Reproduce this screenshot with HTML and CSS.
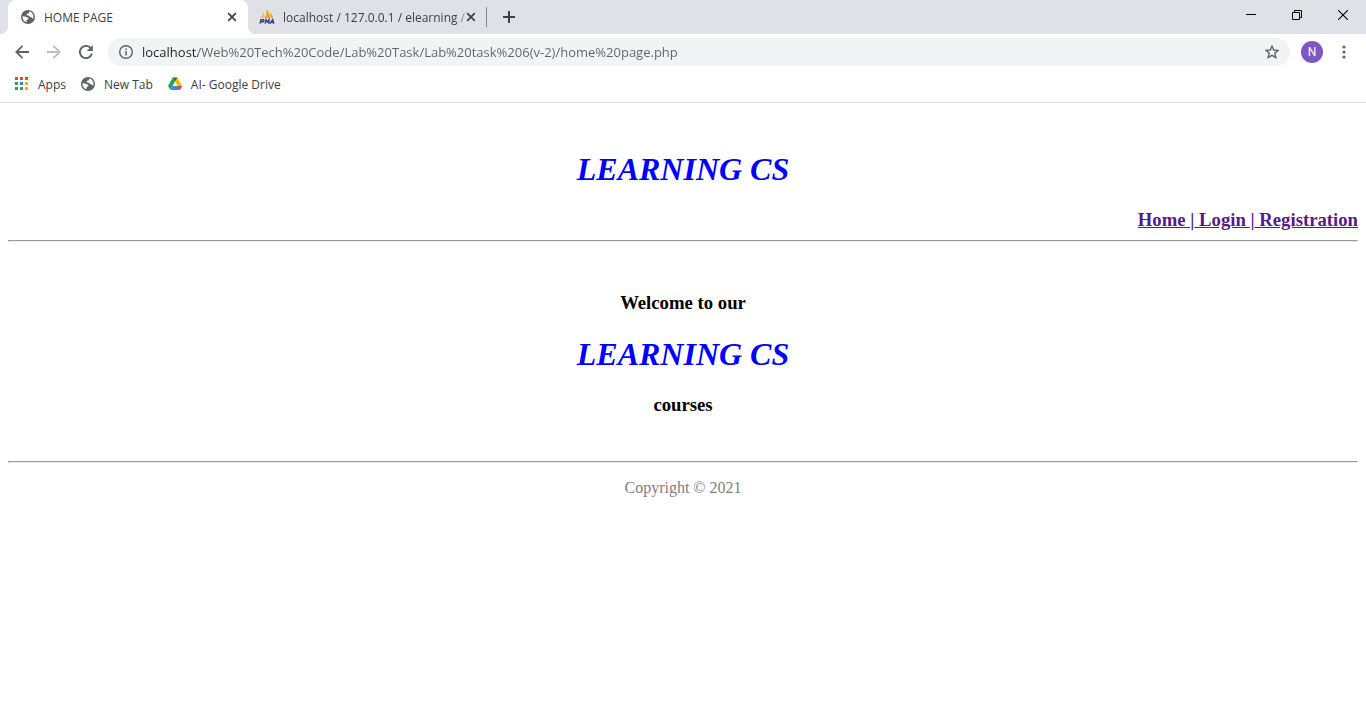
FILE: index.html
```html
<!DOCTYPE html>
<html lang="en">
<head>
<meta charset="utf-8">
<meta name="viewport" content="width=device-width, initial-scale=1">
<title>HOME PAGE</title>
<link rel="stylesheet" href="styles.css">
</head>
<body>
<svg class="defs" aria-hidden="true">
  <symbol id="globe" viewBox="0 0 14 14">
    <circle cx="7" cy="7" r="7" fill="#5f6368"/>
    <path d="M1.4 6.2 L4.2 6.6 Q5.6 7.6 6.8 7.5 Q8 8.2 7.2 9.2 L5.8 9.8 L5.4 12.3 Q1.6 11 1.4 6.2Z" fill="#fff"/>
    <path d="M8.4 1.6 Q11 2.2 12.2 4.7 L12.4 8.8 L11.2 8 L10.2 7.2 L8.6 6.6 L7.2 5.6 L5.6 5.2 L6 3.8 L7.6 3.6Z" fill="#fff"/>
  </symbol>
  <symbol id="close" viewBox="0 0 10 10">
    <path d="M1.2 1.2 L8.8 8.8 M8.8 1.2 L1.2 8.8" stroke="#3c4043" stroke-width="1.7" fill="none"/>
  </symbol>
</svg>

<header class="browser">
  <div class="tabstrip">
    <div class="tab tab-active">
      <svg class="icon14"><use href="#globe"/></svg>
      <span class="tab-title">HOME PAGE</span>
      <button class="tab-close" aria-label="Close HOME PAGE"><svg class="icon10"><use href="#close"/></svg></button>
    </div>
    <div class="tab tab-idle">
      <svg class="icon16" viewBox="0 0 16 16">
        <path d="M1 9 Q4 6.5 4.7 2.5 L5.5 9Z" fill="#f7b56b"/>
        <path d="M5.8 9 Q8 4.5 7.8 0 Q10.5 4 11 9Z" fill="#f89c1c"/>
        <path d="M11.2 9 L10.9 3 Q13.5 5.5 14.5 9Z" fill="#f8a63a"/>
        <path d="M1 14.7 L2 10.7 H4.5 Q5.5 11.8 4 12.8 H1.7 M6.2 14.7 L7 10.7 L8.3 13 L10 10.7 L9.8 14.7 M11 14.7 L13.7 10.7 L14.8 14.7 M12 13.4 H14.7" fill="none" stroke="#3c3f70" stroke-width="1.4"/>
      </svg>
      <span class="tab-title tab-title-fade">localhost / 127.0.0.1 / elearning /</span>
      <button class="tab-close" aria-label="Close localhost"><svg class="icon10"><use href="#close"/></svg></button>
    </div>
    <button class="new-tab" aria-label="New tab">
      <svg class="icon12" viewBox="0 0 12 12"><path d="M6 0 V12 M0 6 H12" stroke="#3c4043" stroke-width="2"/></svg>
    </button>
    <div class="window-controls">
      <button aria-label="Minimize"><svg class="icon10" viewBox="0 0 10 10"><path d="M0 4.5 H10" stroke="#000"/></svg></button>
      <button aria-label="Restore"><svg class="icon10" viewBox="0 0 10 10"><path d="M.5 2.5 H7.5 V9.5 H.5Z M2.5 2.5 V.5 H9.5 V7.5 H7.5" fill="none" stroke="#000"/></svg></button>
      <button aria-label="Close"><svg class="icon10" viewBox="0 0 10 10"><path d="M0 0 L10 10 M10 0 L0 10" stroke="#000" stroke-width="1.1"/></svg></button>
    </div>
  </div>

  <div class="toolbar">
    <div class="nav-buttons">
      <button aria-label="Back"><svg class="icon14" viewBox="0 0 14 14"><path d="M14 7 H1.5 M7.5 .8 L1.3 7 L7.5 13.2" fill="none" stroke="#5f6368" stroke-width="1.8"/></svg></button>
      <button aria-label="Forward"><svg class="icon14" viewBox="0 0 14 14"><path d="M0 7 H12.5 M6.5 .8 L12.7 7 L6.5 13.2" fill="none" stroke="#bbbdbf" stroke-width="1.8"/></svg></button>
      <button aria-label="Reload"><svg class="icon14" viewBox="0 0 14 14"><path d="M12.9 8.6 A6.1 6.1 0 1 1 11.5 2.9" fill="none" stroke="#5f6368" stroke-width="1.9"/><path d="M13.8 0 V6 H7.8Z" fill="#5f6368"/></svg></button>
    </div>
    <div class="omnibox">
      <svg class="icon14" viewBox="0 0 14 14"><circle cx="7" cy="7" r="6.3" fill="none" stroke="#5f6368" stroke-width="1.4"/><path d="M7 6 V10.5 M7 3.4 V5" stroke="#5f6368" stroke-width="1.5"/></svg>
      <input class="url" type="text" aria-label="Address" value="localhost/Web%20Tech%20Code/Lab%20Task/Lab%20task%206(v-2)/home%20page.php">
      <button class="star" aria-label="Bookmark this page"><svg class="icon14" viewBox="0 0 14 14"><path d="M7 1.2 L8.7 5 L13 5.4 L9.8 8.2 L10.8 12.6 L7 10.3 L3.2 12.6 L4.2 8.2 L1 5.4 L5.3 5Z" fill="none" stroke="#5f6368" stroke-width="1.4"/></svg></button>
    </div>
    <button class="avatar" aria-label="Profile">N</button>
    <button class="menu" aria-label="Menu"><svg class="icon14" viewBox="0 0 14 14"><g fill="#5f6368"><circle cx="7" cy="2" r="1.6"/><circle cx="7" cy="7" r="1.6"/><circle cx="7" cy="12" r="1.6"/></g></svg></button>
  </div>

  <nav class="bookmarks" aria-label="Bookmarks">
    <a href="#"><svg class="icon14" viewBox="0 0 14 14">
      <path d="M0 0h3v3H0z M5 0h3v3H5z M10 0h3v3h-3z" fill="#ea4335"/>
      <path d="M0 5h3v3H0z M0 10h3v3H0z M5 10h3v3H5z" fill="#34a04e"/>
      <path d="M5 5h3v3H5z" fill="#1a8cf8"/>
      <path d="M10 5h3v3h-3z M10 10h3v3h-3z" fill="#f5b400"/>
    </svg>Apps</a>
    <a href="#"><svg class="icon14"><use href="#globe"/></svg>New Tab</a>
    <a href="#"><svg class="icon14" viewBox="0 0 14 14">
      <path d="M4.7 .5 L7 4.4 L2.3 12.8 L0 9Z" fill="#1da55a"/>
      <path d="M4.7 .5 H9.3 L14 9 H9.6Z" fill="#ffba00"/>
      <path d="M4.5 9 H14 L11.7 13 H2.3Z" fill="#4285f4"/>
      <path d="M9.6 9 H14 L11.7 13Z" fill="#ea4335"/>
      <path d="M4.7 .5 H9.3 L7 4.4Z" fill="#188038"/>
    </svg>AI- Google Drive</a>
  </nav>
</header>

<main class="page">
  <h1 class="brand">LEARNING CS</h1>
  <h3 class="site-nav"><a href="#">Home |</a><a href="#"> Login |</a><a href="#"> Registration</a></h3>
  <hr>
  <section class="welcome">
    <h3>Welcome to our</h3>
    <h1 class="brand">LEARNING CS</h1>
    <h3>courses</h3>
  </section>
  <hr>
  <footer class="copyright">Copyright © 2021</footer>
</main>
</body>
</html>
```
FILE: styles.css
```css
* { box-sizing: border-box; }

body {
  margin: 0;
  background: #fff;
  font-family: "Liberation Serif", "Times New Roman", serif;
  font-size: 16px;
}

button {
  display: flex;
  align-items: center;
  justify-content: center;
  border: 0;
  padding: 0;
  background: none;
}

svg { display: block; flex: none; }
.defs { position: absolute; width: 0; height: 0; }
.icon10 { width: 10px; height: 10px; }
.icon12 { width: 12px; height: 12px; }
.icon14 { width: 14px; height: 14px; }
.icon16 { width: 16px; height: 16px; }

/* Browser frame */
.browser {
  font-family: "Open Sans", "Noto Sans", sans-serif;
  font-size: 12px;
  color: #3c4043;
  border-bottom: 1px solid #dadce0;
}

.tabstrip {
  display: flex;
  height: 34px;
  padding-left: 8px;
  background: #dee1e6;
}

.tab {
  position: relative;
  display: flex;
  align-items: center;
  width: 240px;
  height: 34px;
}

.tab-active {
  padding: 0 10px 0 13px;
  background: #fff;
  border-radius: 8px 8px 0 0;
}

.tab-active::before,
.tab-active::after {
  content: "";
  position: absolute;
  bottom: 0;
  width: 8px;
  height: 8px;
}
.tab-active::before { left: -8px; background: radial-gradient(circle at 0 0, #dee1e6 8px, #fff 8px); }
.tab-active::after { right: -8px; background: radial-gradient(circle at 100% 0, #dee1e6 8px, #fff 8px); }

.tab-idle { padding: 0 11px; }
.tab-idle::after {
  content: "";
  position: absolute;
  right: 1px;
  top: 7px;
  width: 1px;
  height: 20px;
  background: #85888c;
}

.tab-title {
  flex: 1;
  margin-left: 9px;
  white-space: nowrap;
}
.tab-title-fade {
  margin-left: 8px;
  -webkit-mask-image: linear-gradient(to right, #000 172px, transparent 188px);
  mask-image: linear-gradient(to right, #000 172px, transparent 188px);
}
.tab-close { width: 12px; height: 16px; }
.new-tab { width: 28px; margin-left: 7px; }

.window-controls { display: flex; height: 29px; margin-left: auto; }
.window-controls button { width: 46px; }

.toolbar {
  display: flex;
  align-items: center;
  height: 36px;
  padding: 0 15px;
}
.nav-buttons { display: flex; gap: 18px; margin-right: 15px; }

.omnibox {
  display: flex;
  flex: 1;
  align-items: center;
  gap: 9px;
  height: 28px;
  padding: 0 11px;
  border-radius: 14px;
  background: #f1f3f4;
}
.url {
  flex: 1;
  min-width: 0;
  border: 0;
  padding: 0;
  font: 13px/20px "Open Sans", "Noto Sans", sans-serif;
  color: #5f6368;
  background: linear-gradient(to right, #202124 56px, #5f6368 56px);
  -webkit-background-clip: text;
  background-clip: text;
  -webkit-text-fill-color: transparent;
}
.avatar {
  width: 22px;
  height: 22px;
  margin: 0 14px 0 11px;
  border-radius: 50%;
  background: #7e57c2;
  color: #fff;
  font: 12px "Roboto", sans-serif;
}

.bookmarks {
  display: flex;
  align-items: center;
  gap: 15px;
  height: 32px;
  padding: 0 15px 4px;
}
.bookmarks a {
  display: flex;
  align-items: center;
  gap: 9px;
  color: #3c4043;
  text-decoration: none;
}

/* Page */
.page { padding: 47px 8px 0; }
.page h1, .page h3 { margin: 0; text-align: center; }
.page h1 { font-size: 32px; line-height: 38px; }
.page h3 { line-height: 22px; }
.page hr { margin: 0; }
.page .brand { color: #00f; font-style: italic; }
.page .site-nav { margin: 21px 0 9px; text-align: right; }
.site-nav a { color: #551a8b; }

.welcome {
  display: flex;
  flex-direction: column;
  gap: 21px;
  padding: 50px 0 45px;
}
.copyright {
  margin-top: 16px;
  line-height: 18px;
  text-align: center;
  color: #808080;
}
```
